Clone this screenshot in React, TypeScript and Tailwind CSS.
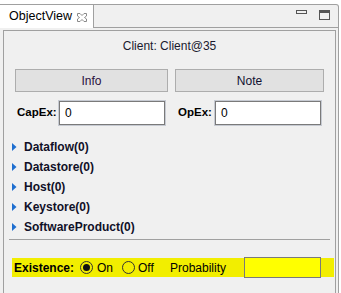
import React from "react";

function CloseIcon() {
  return (
    <svg width="10" height="9" viewBox="0 0 10 9" className="block">
      <path
        d="M0.5 0.5 H3 L5 2.5 L7 0.5 H9.5 V3 L7.5 4.5 L9.5 6 V8.5 H7 L5 6.5 L3 8.5 H0.5 V6 L2.5 4.5 L0.5 3 Z"
        fill="#fff"
        stroke="#8a8a8a"
        strokeWidth="1"
      />
    </svg>
  );
}

function Tri() {
  return (
    <svg width="5" height="8" viewBox="0 0 5 8" className="block">
      <path d="M0 0 L4.5 4 L0 8 Z" fill="#1e6fd0" />
    </svg>
  );
}

function Radio({ on }: { on: boolean }) {
  return (
    <div className="w-[13px] h-[13px] rounded-full border border-[#333] flex items-center justify-center">
      {on && <div className="w-[7px] h-[7px] rounded-full bg-[#111]" />}
    </div>
  );
}

const items = ["Dataflow(0)", "Datastore(0)", "Host(0)", "Keystore(0)", "SoftwareProduct(0)"];

export default function App() {
  return (
    <div
      className="w-[341px] h-[293px] bg-white overflow-hidden text-[12px] text-black"
      style={{ fontFamily: '"Liberation Sans", Arial, sans-serif' }}
    >
      <div className="h-[4px]" />
      <div className="flex h-[24px]">
        <div className="w-[94px] bg-white border-t border-r border-[#a0a0a0] flex items-center pl-[9px]">
          <span className="w-[68px] text-[12.5px] leading-none">ObjectView</span>
          <span className="mt-[2px]">
            <CloseIcon />
          </span>
        </div>
        <div className="flex-1 mr-[2px] bg-[#f0f0f0] border-t border-b border-r border-[#a0a0a0] rounded-tr-[3px] relative">
          <div className="absolute left-[202px] top-[5px] w-[11px] h-[4px] border border-[#555]" />
          <div className="absolute left-[225px] top-[5px] w-[11px] h-[10px] border border-[#555] border-t-[3px]" />
        </div>
      </div>
      <div className="h-[265px] mr-[2px] bg-[#f0f0f0] border-r border-[#a0a0a0] pl-[3px] pr-[2px] pt-[2px]">
        <div className="h-full border-l border-t border-r border-[#a0a0a0] bg-[#f0f0f0] flex flex-col">
          <div className="mt-[7px] h-[16px] leading-[16px] text-center text-[#1a1a2e]">Client: Client@35</div>
          <div className="mt-[15px] ml-[11px] flex gap-[7px]">
            <div className="w-[153px] h-[23px] bg-[#e1e1e1] border border-[#adadad] flex items-center justify-center text-[#2a1040]">
              Info
            </div>
            <div className="w-[149px] h-[23px] bg-[#e1e1e1] border border-[#adadad] flex items-center justify-center text-[#101030]">
              Note
            </div>
          </div>
          <div className="mt-[9px] ml-[13px] flex items-center h-[24px]">
            <div className="w-[42px] font-bold text-[11.5px]">CapEx:</div>
            <div className="w-[106px] h-[24px] bg-white border border-[#7a7a7a] shadow-[0_0_0_1px_#c6cad2] flex items-center pl-[5px]">
              0
            </div>
            <div className="ml-[13px] w-[37px] font-bold text-[11.5px]">OpEx:</div>
            <div className="w-[106px] h-[24px] bg-white border border-[#7a7a7a] shadow-[0_0_0_1px_#c6cad2] flex items-center pl-[5px]">
              0
            </div>
          </div>
          <div className="mt-[12px] flex flex-col">
            {items.map((t) => (
              <div key={t} className="h-[20px] flex items-center pl-[8px]">
                <Tri />
                <span className="ml-[7px] font-bold text-[#101028]">{t}</span>
              </div>
            ))}
          </div>
          <div className="mt-[2px] ml-[5px] w-[321px] h-px bg-[#a0a0a0]" />
          <div className="mt-[18px] ml-[8px] w-[322px] h-[19px] bg-[#f2ee00] flex items-center">
            <div className="w-[68px] pl-[2px] font-bold">Existence:</div>
            <div className="w-[42px] flex items-center">
              <Radio on />
              <span className="ml-[4px]">On</span>
            </div>
            <div className="w-[48px] flex items-center">
              <Radio on={false} />
              <span className="ml-[3px]">Off</span>
            </div>
            <div className="w-[74px]">Probability</div>
            <div className="w-[77px] h-[21px] -my-[1px] bg-[#ffff00] border border-[#7a7a7a]" />
          </div>
        </div>
      </div>
    </div>
  );
}
